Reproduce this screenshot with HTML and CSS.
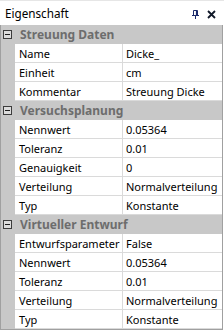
FILE: index.html
```html
<!DOCTYPE html>
<html>
<head>
<meta charset="utf-8">
<link rel="stylesheet" href="styles.css">
</head>
<body>
<div class="panel">
  <div class="titlebar">
    <span class="title">Eigenschaft</span>
    <span class="tools">
      <svg class="pin" width="7" height="9" viewBox="0 0 7 9"><path d="M1.5 0.5h4v5h-4z" fill="none" stroke="#1b2a6b" stroke-width="1"/><path d="M4.5 0.5v5" stroke="#1b2a6b" stroke-width="1.2"/><path d="M0 5.5h7" stroke="#1b2a6b" stroke-width="1"/><path d="M3.5 6v3" stroke="#1b2a6b" stroke-width="1"/></svg>
      <svg class="close" width="9" height="9" viewBox="0 0 9 9"><path d="M1 1L8 8M8 1L1 8" stroke="#101828" stroke-width="1.8"/></svg>
    </span>
  </div>
  <div class="grid">
    <div class="cat"><span class="toggle"></span><span class="cat-label">Streuung Daten</span></div>
    <div class="prop"><span class="gut"></span><span class="name">Name</span><span class="val">Dicke_</span></div>
    <div class="prop"><span class="gut"></span><span class="name">Einheit</span><span class="val">cm</span></div>
    <div class="prop"><span class="gut"></span><span class="name">Kommentar</span><span class="val">Streuung Dicke</span></div>
    <div class="cat"><span class="toggle"></span><span class="cat-label">Versuchsplanung</span></div>
    <div class="prop"><span class="gut"></span><span class="name">Nennwert</span><span class="val">0.05364</span></div>
    <div class="prop"><span class="gut"></span><span class="name">Toleranz</span><span class="val">0.01</span></div>
    <div class="prop"><span class="gut"></span><span class="name">Genauigkeit</span><span class="val">0</span></div>
    <div class="prop"><span class="gut"></span><span class="name">Verteilung</span><span class="val">Normalverteilung</span></div>
    <div class="prop"><span class="gut"></span><span class="name">Typ</span><span class="val">Konstante</span></div>
    <div class="cat"><span class="toggle"></span><span class="cat-label">Virtueller Entwurf</span></div>
    <div class="prop"><span class="gut"></span><span class="name">Entwurfsparameter</span><span class="val">False</span></div>
    <div class="prop"><span class="gut"></span><span class="name">Nennwert</span><span class="val">0.05364</span></div>
    <div class="prop"><span class="gut"></span><span class="name">Toleranz</span><span class="val">0.01</span></div>
    <div class="prop"><span class="gut"></span><span class="name">Verteilung</span><span class="val">Normalverteilung</span></div>
    <div class="prop"><span class="gut"></span><span class="name">Typ</span><span class="val">Konstante</span></div>
  </div>
</div>
</body>
</html>
```
FILE: styles.css
```css
html, body {
  margin: 0;
  padding: 0;
  background: #ffffff;
}
.panel {
  width: 224px;
  height: 332px;
  font-family: "Noto Sans", "Open Sans", sans-serif;
  font-size: 11px;
  color: #000;
  background: #fff;
}
.titlebar {
  height: 25px;
  box-sizing: border-box;
  border-top: 1px solid #e6e6e6;
  display: flex;
  align-items: center;
  justify-content: space-between;
  padding: 0 8px 0 5px;
}
.title {
  font-size: 11.7px;
  line-height: 16px;
}
.tools {
  display: flex;
  align-items: center;
  gap: 8px;
  padding-top: 2px;
}
.pin, .close {
  display: block;
}
.grid {
  width: 223px;
  box-sizing: border-box;
  border-left: 1px solid #a0a0a0;
  border-right: 1px solid #a0a0a0;
  border-bottom: 1px solid #a0a0a0;
  display: flex;
  flex-direction: column;
}
.cat {
  height: 19px;
  background: #c8c8c8;
  display: flex;
  align-items: center;
}
.toggle {
  width: 7px;
  height: 7px;
  border: 1px solid #3c3c3c;
  margin-left: 2px;
  position: relative;
  background: #dcdcdc;
}
.toggle::after {
  content: "";
  position: absolute;
  left: 1px;
  top: 3px;
  width: 5px;
  height: 1px;
  background: #1e1e1e;
}
.cat-label {
  margin-left: 8px;
  font-size: 12px;
  font-weight: bold;
  color: #6d6d6d;
}
.prop {
  height: 19px;
  display: grid;
  grid-template-columns: 14px 108px 1fr;
}
.gut {
  background: #c8c8c8;
}
.name, .val {
  box-sizing: border-box;
  border-bottom: 1px solid #dadada;
  display: flex;
  align-items: center;
  white-space: nowrap;
  overflow: hidden;
}
.name {
  padding-left: 4px;
  border-right: 1px solid #dadada;
}
.val {
  padding-left: 3px;
}
```
